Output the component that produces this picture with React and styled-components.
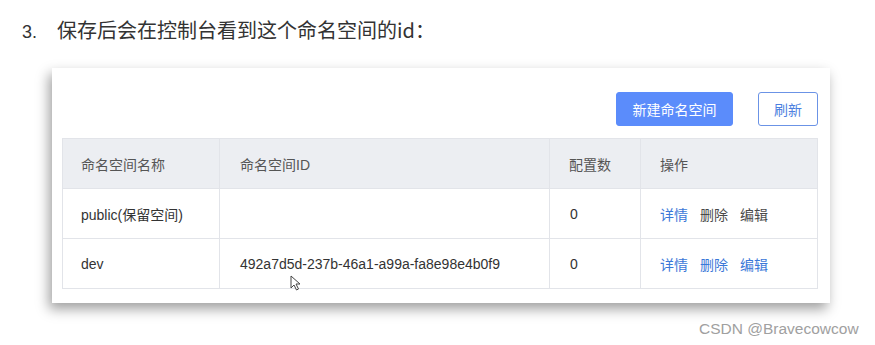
import React from 'react';
import styled, { createGlobalStyle } from 'styled-components';

const GlobalStyle = createGlobalStyle`
  *, *::before, *::after { box-sizing: border-box; }
  body {
    margin: 0;
    background: #ffffff;
    font-family: "Liberation Sans", "Noto Sans CJK SC", sans-serif;
  }
`;

const Page = styled.div`
  width: 875px;
  height: 345px;
  position: relative;
  overflow: hidden;
  background: #fff;
`;

const Heading = styled.div`
  display: flex;
  align-items: baseline;
  height: 43px;
  padding: 17px 0 0 22px;
  font-size: 20px;
  line-height: 26px;
  color: #333;
  font-family: "Noto Sans CJK SC", sans-serif;
`;

const Num = styled.span`
  width: 35px;
  font-family: "Liberation Sans", sans-serif;
  font-size: 18px;
`;

const Card = styled.div`
  margin: 25px 0 0 52px;
  width: 778px;
  height: 235px;
  padding: 24px 12px 0 10px;
  background: #fff;
  box-shadow: -3px 6px 12px rgba(0, 0, 0, 0.38);
`;

const Toolbar = styled.div`
  display: flex;
  justify-content: flex-end;
  gap: 25px;
  margin-bottom: 12px;
`;

const Button = styled.button`
  height: 34px;
  padding: 0;
  width: ${p => (p.primary ? '117px' : '60px')};
  border-radius: 3px;
  border: 1px solid ${p => (p.primary ? '#5b8cfb' : '#6b93e6')};
  background: ${p => (p.primary ? '#5b8cfb' : '#fff')};
  color: ${p => (p.primary ? '#fff' : '#4c7fe0')};
  font-size: 14px;
  font-family: "Noto Sans CJK SC", sans-serif;
`;

const Table = styled.div`
  display: grid;
  width: 756px;
  grid-template-columns: 157px 330px 91px 1fr;
  border: 1px solid #e2e4e9;
`;

const Cell = styled.div`
  height: ${p => (p.bottom ? 49 : 50)}px;
  display: flex;
  align-items: center;
  gap: 12px;
  padding-left: ${p => p.pad || 18}px;
  font-size: 14px;
  color: ${p => (p.head ? '#555' : '#333')};
  background: ${p => (p.head ? '#eceef2' : '#fff')};
  border-right: ${p => (p.last ? 'none' : '1px solid #e2e4e9')};
  border-bottom: ${p => (p.bottom ? 'none' : '1px solid #e2e4e9')};
`;

const Link = styled.span`
  color: ${p => (p.muted ? '#4a4a4a' : '#3b78d8')};
  font-family: "Noto Sans CJK SC", sans-serif;
`;

const Watermark = styled.div`
  position: absolute;
  left: 699px;
  top: 320px;
  font-size: 15.5px;
  color: #a0a0a0;
  font-family: "Liberation Sans", sans-serif;
`;

const Cursor = styled.svg`
  position: absolute;
  left: 290px;
  top: 275px;
`;

const rows = [
  { name: 'public(保留空间)', id: '', count: '0', muted: true },
  { name: 'dev', id: '492a7d5d-237b-46a1-a99a-fa8e98e4b0f9', count: '0', muted: false },
];

export default function App() {
  return (
    <Page>
      <GlobalStyle />
      <Heading>
        <Num>3.</Num>
        保存后会在控制台看到这个命名空间的id：
      </Heading>
      <Card>
        <Toolbar>
          <Button primary>新建命名空间</Button>
          <Button>刷新</Button>
        </Toolbar>
        <Table>
          <Cell head>命名空间名称</Cell>
          <Cell head pad={20}>命名空间ID</Cell>
          <Cell head pad={19}>配置数</Cell>
          <Cell head last pad={19}>操作</Cell>
          {rows.map((r, i) => {
            const bottom = i === rows.length - 1;
            return (
              <React.Fragment key={r.name}>
                <Cell bottom={bottom}>{r.name}</Cell>
                <Cell bottom={bottom} pad={20}>{r.id}</Cell>
                <Cell bottom={bottom} pad={20}>{r.count}</Cell>
                <Cell bottom={bottom} last pad={19}>
                  <Link>详情</Link>
                  <Link muted={r.muted}>删除</Link>
                  <Link muted={r.muted}>编辑</Link>
                </Cell>
              </React.Fragment>
            );
          })}
        </Table>
      </Card>
      <Cursor width="11" height="16" viewBox="0 0 11 16">
        <path d="M1 1 L1 13 L4 10 L6.5 15 L8.5 14 L6 9 L10 9 Z" fill="#fff" stroke="#444" strokeWidth="1" />
      </Cursor>
      <Watermark>CSDN @Bravecowcow</Watermark>
    </Page>
  );
}
